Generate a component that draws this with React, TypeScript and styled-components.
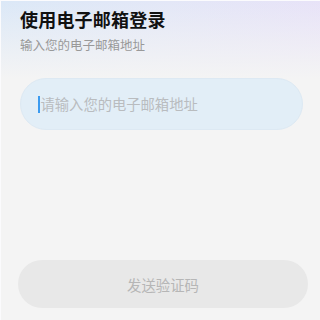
import React from 'react';
import styled, { createGlobalStyle } from 'styled-components';

const GlobalStyle = createGlobalStyle`
  html, body {
    margin: 0;
    padding: 0;
    background: #f4f4f4;
  }
  body {
    font-family: "Noto Sans CJK SC", "Noto Sans", sans-serif;
  }
`;

const Page = styled.div`
  width: 320px;
  height: 320px;
  box-sizing: border-box;
  border-top: 1px solid #fbfbfd;
  border-left: 1px solid #fbfbfd;
  background:
    linear-gradient(180deg, rgba(244, 244, 244, 0) 0%, #f4f4f4 78px),
    linear-gradient(100deg, #dbe8f7 0%, #e3e7f7 45%, #e9e1f8 100%);
  display: flex;
  flex-direction: column;
  padding: 5px 16px 12px 16px;
`;

const Header = styled.div`
  padding-left: 3px;
  display: flex;
  flex-direction: column;
  gap: 4px;
`;

const Title = styled.h1`
  margin: 0;
  font-size: 18px;
  line-height: 26px;
  font-weight: 700;
  color: #111;
  letter-spacing: 0.2px;
`;

const Subtitle = styled.p`
  margin: 0;
  font-size: 12.5px;
  line-height: 18px;
  color: #999;
`;

const Field = styled.div`
  margin: 24px 1px 0 3px;
  height: 52px;
  border-radius: 26px;
  background: #e2eef7;
  border: 1px solid #dde9f3;
  box-sizing: border-box;
  display: flex;
  align-items: center;
  padding-left: 17px;
`;

const Caret = styled.span`
  width: 1.5px;
  height: 17px;
  background: #3b9bf0;
  margin-right: 1px;
`;

const Placeholder = styled.span`
  font-size: 14.3px;
  color: #b9bcbf;
  line-height: 20px;
`;

const Spacer = styled.div`
  flex: 1;
`;

const SendButton = styled.button`
  height: 48px;
  width: 290px;
  margin-left: 1px;
  border-radius: 24px;
  border: none;
  background: #e8e8e8;
  color: #b6b6b6;
  font-family: inherit;
  font-size: 14.4px;
  display: flex;
  align-items: center;
  justify-content: center;
  padding: 0;
`;

export default function App() {
  return (
    <>
      <GlobalStyle />
      <Page>
        <Header>
          <Title>使用电子邮箱登录</Title>
          <Subtitle>输入您的电子邮箱地址</Subtitle>
        </Header>
        <Field>
          <Caret />
          <Placeholder>请输入您的电子邮箱地址</Placeholder>
        </Field>
        <Spacer />
        <SendButton>发送验证码</SendButton>
      </Page>
    </>
  );
}
